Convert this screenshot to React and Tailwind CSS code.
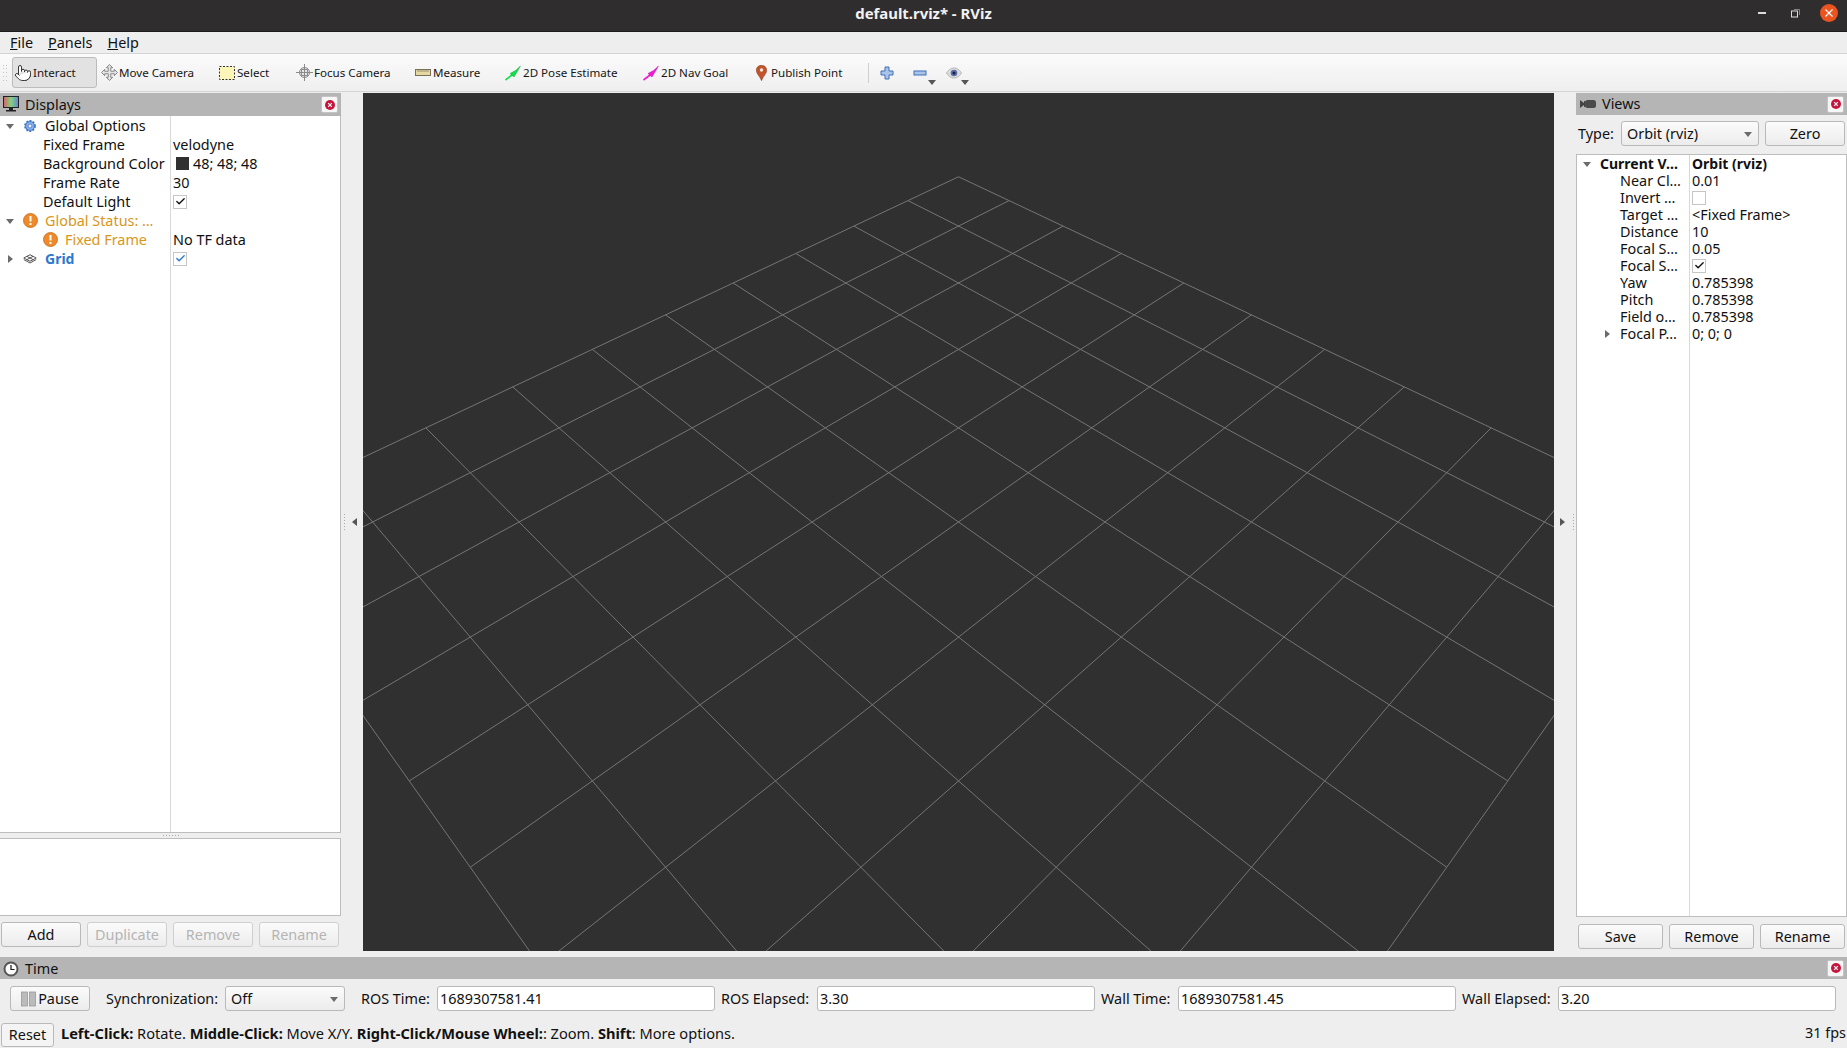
import { Check, Pointer } from "lucide-react";

// rviz orbit camera: distance 10, yaw/pitch/fov 0.785398, 10 cell grid
const VIEW_W = 1191;
const VIEW_H = 858;
const focal = VIEW_H / 2 / Math.tan(0.785398 / 2);

function project(x, y) {
  const rx = x - 5;
  const ry = y - 5;
  const rz = -7.07107;
  const depth = -(rx * -0.5 + ry * -0.5 + rz * -0.70711) * -1;
  const up = rx * -0.5 + ry * -0.5 + rz * 0.70711;
  const right = rx * -0.70711 + ry * 0.70711;
  return [VIEW_W / 2 + (focal * right) / depth, VIEW_H / 2 - (focal * up) / depth];
}

function gridLines() {
  const lines = [];
  for (let i = -5; i <= 5; i++) {
    lines.push([project(i, -5), project(i, 5)]);
    lines.push([project(-5, i), project(5, i)]);
  }
  return lines;
}

function Grid3D() {
  return (
    <svg viewBox={`0 0 ${VIEW_W} ${VIEW_H}`} className="block w-full h-full">
      {gridLines().map(([a, b], i) => (
        <line key={i} x1={a[0]} y1={a[1]} x2={b[0]} y2={b[1]} stroke="#757575" strokeWidth="1" />
      ))}
    </svg>
  );
}

function Arrow({ dir = "down", color = "#6b6b6b" }) {
  const pts = dir === "down" ? "0,2 8,2 4,7" : dir === "right" ? "2,0 7,4 2,8" : "6,0 1,4 6,8";
  return (
    <svg width="8" height="8" viewBox="0 0 8 8" className="shrink-0">
      <polygon points={pts} fill={color} />
    </svg>
  );
}

function CloseBtn() {
  return (
    <div className="w-[17px] h-[17px] bg-[#f6f6f6] border border-[#c4c4c4] rounded-[2px] flex items-center justify-center shrink-0">
      <svg width="12" height="12" viewBox="0 0 12 12">
        <circle cx="6" cy="6" r="5" fill="#c8143c" />
        <path d="M4.2 4.2l3.6 3.6M7.8 4.2l-3.6 3.6" stroke="#fff" strokeWidth="1.2" />
      </svg>
    </div>
  );
}

function Warn() {
  return (
    <svg width="15" height="15" viewBox="0 0 15 15" className="shrink-0">
      <circle cx="7.5" cy="7.5" r="7" fill="#ee8a2c" stroke="#c96a12" strokeWidth="0.8" />
      <rect x="6.5" y="3" width="2" height="5.5" fill="#fff" />
      <rect x="6.5" y="10" width="2" height="2" fill="#fff" />
    </svg>
  );
}

function Gear() {
  return (
    <svg width="14" height="14" viewBox="0 0 14 14" className="shrink-0">
      <circle cx="7" cy="7" r="5" fill="#8fb3e6" stroke="#3f74c4" strokeWidth="1.8" strokeDasharray="2 1.2" />
      <circle cx="7" cy="7" r="4.4" fill="none" stroke="#4d82d2" strokeWidth="1" />
      <circle cx="7" cy="7" r="2" fill="#e8f0fb" stroke="#3f74c4" strokeWidth="0.8" />
    </svg>
  );
}

function GridIcon() {
  return (
    <svg width="14" height="10" viewBox="0 0 14 10" className="shrink-0">
      <path d="M7 .7L13.2 4 7 7.3.8 4z M4 2.4l6.2 3.3M10 2.4L3.8 5.7M.8 5.6L7 9l6.2-3.4" fill="none" stroke="#444" strokeWidth="0.9" />
    </svg>
  );
}

function Box({ checked, color = "#111" }) {
  return (
    <div className="w-[14px] h-[14px] bg-white border border-[#c6c6c6] flex items-center justify-center shrink-0">
      {checked && <Check size={11} strokeWidth={3} color={color} />}
    </div>
  );
}

function TreeRow({ label, labelClass = "", indent, arrow, icon, value, rowClass = "h-[19px]", split = "w-[170px]", valueClass = "pl-[3px]" }) {
  return (
    <div className={`flex items-center ${rowClass}`}>
      <div className={`flex items-center shrink-0 overflow-hidden whitespace-nowrap ${split}`} style={{ paddingLeft: indent }}>
        {arrow && <span className="mr-[9px]"><Arrow dir={arrow} /></span>}
        {icon}
        <span className={labelClass}>{label}</span>
      </div>
      <div className={`flex items-center whitespace-nowrap ${valueClass}`}>{value}</div>
    </div>
  );
}

function QtButton({ children, disabled, className = "" }) {
  return (
    <div
      className={`h-[25px] border rounded-[3px] flex items-center justify-center bg-gradient-to-b from-[#fbfbfb] to-[#ececec] ${
        disabled ? "border-[#cfcfcf] text-[#b4b4b4]" : "border-[#b9b9b9] text-[#111]"
      } ${className}`}
    >
      {children}
    </div>
  );
}

function ToolItem({ icon, label, className }) {
  return (
    <div className={`flex items-center pl-[2px] gap-[2px] h-full text-[11.6px] text-[#161616] whitespace-nowrap ${className}`}>
      <span className="w-[16px] h-[16px] flex items-center justify-center shrink-0">{icon}</span>
      {label}
    </div>
  );
}

function DiagArrow({ color, dark }) {
  return (
    <svg width="16" height="16" viewBox="0 0 16 16">
      <path d="M0.5 15L9 8.5" stroke={color} strokeWidth="1.6" />
      <path d="M5 8.5l5.5-3 5-4.5-3.5 6-3 5z" fill={color} stroke={dark} strokeWidth="0.4" />
    </svg>
  );
}

function Toolbar() {
  return (
    <div className="h-[39px] flex items-center bg-gradient-to-b from-[#fbfbfb] to-[#efefef] border-y border-[#d4d4d4] shrink-0 pl-[3px]">
      <div className="w-[5px] h-[16px] mr-[4px] flex flex-wrap content-between">
        {[0, 1, 2, 3, 4].map((i) => (
          <div key={i} className="w-full flex gap-[2px]">
            <span className="w-[1px] h-[1px] bg-[#c4c4c4]" />
            <span className="w-[1px] h-[1px] bg-[#c4c4c4]" />
          </div>
        ))}
      </div>
      <ToolItem
        className="w-[85px] !h-[31px] bg-[#e2e2e2] border border-[#bcbcbc] rounded-[3px] mr-[2px]"
        label="Interact"
        icon={<Pointer size={18} strokeWidth={1.2} color="#222" fill="#fff" className="shrink-0" />}
      />
      <ToolItem
        className="w-[118px]"
        label="Move Camera"
        icon={
          <svg width="17" height="17" viewBox="0 0 16 16" className="shrink-0">
            <path d="M8 .5l3 3H9.200v3.300h3.300V5l3 3-3 3V9.200H9.200v3.300H11l-3 3-3-3h1.800V9.200H3.500V11l-3-3 3-3v1.800h3.300V3.500H5z" fill="#e4e4e4" stroke="#777" strokeWidth="0.8" />
          </svg>
        }
      />
      <ToolItem
        className="w-[77px]"
        label="Select"
        icon={
          <svg width="16" height="14" viewBox="0 0 16 14">
            <rect x="0.5" y="0.5" width="15" height="13" fill="#fbf5b8" stroke="#333" strokeWidth="1" strokeDasharray="2 1.5" />
          </svg>
        }
      />
      <ToolItem
        className="w-[119px]"
        label="Focus Camera"
        icon={
          <svg width="17" height="17" viewBox="0 0 17 17" className="shrink-0">
            <circle cx="8.5" cy="8.5" r="5" fill="#e6e6e6" stroke="#8a8a8a" strokeWidth="1" />
            <path d="M8.5 0v17M0 8.5h17M5.5 5.5v6M11.500 5.500v6M5.500 5.500h6M5.500 11.500h6" stroke="#8a8a8a" strokeWidth="1" />
          </svg>
        }
      />
      <ToolItem
        className="w-[90px]"
        label="Measure"
        icon={
          <svg width="16" height="7" viewBox="0 0 16 7">
            <rect x="0.5" y="0.5" width="15" height="6" fill="#e6d9a0" stroke="#77705a" strokeWidth="1" />
            <path d="M3 1v2M5 1v2M7 1v2M9 1v2M11 1v2M13 1v2" stroke="#77705a" strokeWidth="0.7" />
          </svg>
        }
      />
      <ToolItem className="w-[138px]" label="2D Pose Estimate" icon={<DiagArrow color="#12e04a" dark="#0a9a30" />} />
      <ToolItem className="w-[112px]" label="2D Nav Goal" icon={<DiagArrow color="#f01ad8" dark="#a80c96" />} />
      <ToolItem
        className="w-[113px] !pl-0"
        label="Publish Point"
        icon={
          <svg width="11" height="16" viewBox="0 0 11 16">
            <path d="M5.500 .3C2.400.3.3 2.500.3 5.300c0 3.400 3.500 5.800 5.200 10.400C7.200 11.100 10.700 8.700 10.700 5.300 10.700 2.500 8.600.3 5.500.3z" fill="#c4552b" stroke="#7d3a1c" strokeWidth="0.5" />
            <circle cx="5.500" cy="5" r="1.700" fill="#f5e9df" />
          </svg>
        }
      />
      <div className="w-[1px] h-[20px] bg-[#d0d0d0] ml-[2px]" />
      <div className="ml-[11px] w-[33px]">
        <svg width="14" height="14" viewBox="0 0 14 14">
          <path d="M5 1h4v4h4v4H9v4H5V9H1V5h4z" fill="#a8c4ea" stroke="#3f6fb5" strokeWidth="1" />
        </svg>
      </div>
      <div className="w-[33px] h-[26px] flex items-center relative">
        <svg width="14" height="6" viewBox="0 0 14 6">
          <rect x="1" y="1" width="12" height="4" fill="#a8c4ea" stroke="#3f6fb5" strokeWidth="1" />
        </svg>
        <span className="absolute left-[15px] bottom-0"><Arrow color="#555" /></span>
      </div>
      <div className="w-[33px] h-[26px] flex items-center relative">
        <svg width="16" height="12" viewBox="0 0 16 12">
          <path d="M.5 6C3 2 5.500 1 8 1s5 1 7.500 5C13 10 10.500 11 8 11S3 10 .5 6z" fill="#dcdcdc" stroke="#aaa" strokeWidth="0.8" />
          <circle cx="8" cy="6" r="3.300" fill="#5a6ea8" />
          <circle cx="8" cy="6" r="1.500" fill="#16204a" />
        </svg>
        <span className="absolute left-[15px] bottom-0"><Arrow color="#555" /></span>
      </div>
    </div>
  );
}

function DisplaysPanel() {
  return (
    <div className="w-[341px] shrink-0 flex flex-col">
      <div className="h-[23px] bg-[#b5b5b5] flex items-center justify-between pl-[3px] pr-[3px] shrink-0">
        <div className="flex items-center gap-[6px]">
          <svg width="16" height="16" viewBox="0 0 16 16">
            <defs>
              <linearGradient id="scr" x1="0" x2="1" y1="0" y2="0">
                <stop offset="0" stopColor="#d8606a" />
                <stop offset="0.5" stopColor="#7fd47f" />
                <stop offset="1" stopColor="#6a7fd8" />
              </linearGradient>
            </defs>
            <rect x="0.5" y="0.5" width="15" height="11" fill="url(#scr)" stroke="#222" strokeWidth="1" />
            <path d="M6 12h4v2h3v1.500H3V14h3z" fill="#222" />
          </svg>
          <span>Displays</span>
        </div>
        <CloseBtn />
      </div>
      <div className="flex-1 flex flex-col bg-white border-r border-b border-[#bdbdbd] relative">
        <div className="absolute left-[170px] top-0 bottom-0 w-[1px] bg-[#d9d9d9]" />
        <TreeRow indent={6} arrow="down" icon={<span className="mr-[8px]"><Gear /></span>} label="Global Options" />
        <TreeRow indent={43} label="Fixed Frame" value="velodyne" />
        <TreeRow
          indent={43}
          label="Background Color"
          value={
            <>
              <span className="w-[13px] h-[13px] bg-[#303030] ml-[3px] mr-[4px]" />
              48; 48; 48
            </>
          }
        />
        <TreeRow indent={43} label="Frame Rate" value="30" />
        <TreeRow indent={43} label="Default Light" value={<Box checked />} />
        <TreeRow indent={6} arrow="down" icon={<span className="mr-[7px]"><Warn /></span>} label="Global Status: …" labelClass="text-[#d9961a]" />
        <TreeRow indent={43} icon={<span className="mr-[7px]"><Warn /></span>} label="Fixed Frame" labelClass="text-[#d9961a]" value="No TF data" />
        <TreeRow indent={6} arrow="right" icon={<span className="mr-[8px]"><GridIcon /></span>} label="Grid" labelClass="font-bold text-[#2b78cf] text-[14px]" value={<Box checked color="#2b78cf" />} />
      </div>
      <div className="h-[5px] flex items-center justify-center gap-[2px] shrink-0">
        {[0, 1, 2, 3, 4, 5].map((i) => (
          <span key={i} className="w-[1px] h-[1px] bg-[#aaa]" />
        ))}
      </div>
      <div className="h-[78px] bg-white border-y border-r border-[#bdbdbd] shrink-0" />
      <div className="flex gap-[6px] pl-[1px] pt-[6px] pb-[10px] shrink-0">
        <QtButton className="w-[80px]">Add</QtButton>
        <QtButton disabled className="w-[80px]">Duplicate</QtButton>
        <QtButton disabled className="w-[80px]">Remove</QtButton>
        <QtButton disabled className="w-[80px]">Rename</QtButton>
      </div>
    </div>
  );
}

function Dots() {
  return (
    <div className="flex flex-col gap-[2px]">
      {[0, 1, 2, 3, 4, 5].map((i) => (
        <span key={i} className="w-[1px] h-[1px] bg-[#aaa]" />
      ))}
    </div>
  );
}

function ViewsPanel() {
  const row = { rowClass: "h-[17px]", split: "w-[112px]", indent: 43 };
  return (
    <div className="flex-1 flex flex-col min-w-0">
      <div className="h-[22px] bg-[#b5b5b5] flex items-center justify-between pl-[4px] pr-[3px] shrink-0">
        <div className="flex items-center gap-[6px]">
          <svg width="16" height="10" viewBox="0 0 16 10">
            <path d="M0 1l4 3V2h1v6H4V6L0 9z" fill="#444" />
            <rect x="5" y="1" width="11" height="8" rx="2.500" fill="#4a4a4a" />
          </svg>
          <span>Views</span>
        </div>
        <CloseBtn />
      </div>
      <div className="h-[39px] flex items-center pl-[2px] pb-[2px] shrink-0">
        <span className="w-[43px]">Type:</span>
        <QtButton className="w-[138px] !justify-between px-[5px] pr-[6px]">
          <span>Orbit (rviz)</span>
          <Arrow />
        </QtButton>
        <QtButton className="w-[80px] ml-[6px]">Zero</QtButton>
      </div>
      <div className="flex-1 bg-white border border-[#bdbdbd] relative">
        <div className="absolute left-[112px] top-0 bottom-0 w-[1px] bg-[#d9d9d9]" />
        <TreeRow {...row} indent={6} arrow="down" label="Current V…" labelClass="font-bold text-[14px]" value={<b className="text-[14px]">Orbit (rviz)</b>} />
        <TreeRow {...row} label="Near Cl…" value="0.01" />
        <TreeRow {...row} label="Invert …" value={<Box />} />
        <TreeRow {...row} label="Target …" value="<Fixed Frame>" />
        <TreeRow {...row} label="Distance" value="10" />
        <TreeRow {...row} label="Focal S…" value="0.05" />
        <TreeRow {...row} label="Focal S…" value={<Box checked />} />
        <TreeRow {...row} label="Yaw" value="0.785398" />
        <TreeRow {...row} label="Pitch" value="0.785398" />
        <TreeRow {...row} label="Field o…" value="0.785398" />
        <TreeRow {...row} indent={26} arrow="right" label="Focal P…" value="0; 0; 0" />
      </div>
      <div className="flex gap-[6px] pl-[2px] pt-[7px] pb-[8px] shrink-0">
        <QtButton className="w-[85px]">Save</QtButton>
        <QtButton className="w-[85px]">Remove</QtButton>
        <QtButton className="w-[85px]">Rename</QtButton>
      </div>
    </div>
  );
}

function TimeInput({ value }) {
  return (
    <div className="ml-[6px] w-[278px] h-[25px] bg-white border border-[#b9b9b9] rounded-[3px] flex items-center pl-[2px] shrink-0">{value}</div>
  );
}

function TimePanel() {
  return (
    <div className="shrink-0">
      <div className="h-[22px] bg-[#b5b5b5] flex items-center justify-between pl-[3px] pr-[3px]">
        <div className="flex items-center gap-[6px] pt-[1px]">
          <svg width="16" height="16" viewBox="0 0 16 16">
            <circle cx="8" cy="8" r="6.500" fill="#fff" stroke="#555" strokeWidth="2" />
            <path d="M8 4v4.500h3.500" fill="none" stroke="#111" strokeWidth="1.200" />
          </svg>
          <span>Time</span>
        </div>
        <CloseBtn />
      </div>
      <div className="h-[43px] flex items-center pl-[10px] pb-[4px]">
        <QtButton className="w-[80px] gap-[2px]">
          <svg width="15" height="16" viewBox="0 0 15 16">
            <rect x="0.500" y="1" width="6" height="14" fill="#bbb" stroke="#999" strokeWidth="0.800" />
            <rect x="8.500" y="1" width="6" height="14" fill="#bbb" stroke="#999" strokeWidth="0.800" />
          </svg>
          Pause
        </QtButton>
        <span className="ml-[16px] w-[113px] whitespace-nowrap">Synchronization:</span>
        <QtButton className="ml-[6px] w-[120px] !justify-between px-[5px] pr-[6px]">
          <span>Off</span>
          <Arrow />
        </QtButton>
        <span className="ml-[16px] w-[70px] whitespace-nowrap">ROS Time:</span>
        <TimeInput value="1689307581.41" />
        <span className="ml-[6px] w-[90px] whitespace-nowrap">ROS Elapsed:</span>
        <TimeInput value="3.30" />
        <span className="ml-[6px] w-[71px] whitespace-nowrap">Wall Time:</span>
        <TimeInput value="1689307581.45" />
        <span className="ml-[6px] w-[90px] whitespace-nowrap">Wall Elapsed:</span>
        <TimeInput value="3.20" />
      </div>
    </div>
  );
}

export default function App() {
  return (
    <div className="w-[1847px] h-[1048px] flex flex-col overflow-hidden bg-[#eeeeee] text-[14.4px] text-[#111] font-['Noto_Sans',sans-serif]">
      <div className="h-[32px] bg-[#2f2d2d] border-b border-[#1c1c1c] flex items-center shrink-0 relative">
        <span className="mx-auto font-bold text-[14.900px] text-[#f2f2f2] pb-[4px]">default.rviz* - RViz</span>
        <div className="absolute right-[9px] top-[4px] flex items-center">
          <span className="w-[8px] h-[1.5px] bg-[#ddd] mr-[25px]" />
          <svg width="9" height="9" viewBox="0 0 9 9" className="mr-[20px]">
            <rect x="0.500" y="2" width="6" height="6" fill="none" stroke="#ddd" strokeWidth="1" />
            <path d="M3 0.500h5.500V6" fill="none" stroke="#999" strokeWidth="0.800" />
          </svg>
          <div className="w-[18px] h-[18px] rounded-full bg-[#e95420] flex items-center justify-center">
            <svg width="10" height="10" viewBox="0 0 10 10">
              <path d="M1.500 1.500l7 7M8.500 1.500l-7 7" stroke="#fff" strokeWidth="1.200" />
            </svg>
          </div>
        </div>
      </div>
      <div className="h-[21px] flex items-center gap-[15px] pl-[10px] shrink-0">
        <span><u>F</u>ile</span>
        <span><u>P</u>anels</span>
        <span><u>H</u>elp</span>
      </div>
      <Toolbar />
      <div className="flex-1 flex min-h-0 pt-[1px]">
        <DisplaysPanel />
        <div className="w-[22px] shrink-0 flex items-center gap-[6px] pl-[3px] pb-[6px]">
          <Dots />
          <Arrow dir="left" color="#555" />
        </div>
        <div className="w-[1191px] shrink-0 bg-[#303030] mb-[6px]">
          <Grid3D />
        </div>
        <div className="w-[22px] shrink-0 flex items-center gap-[7px] pl-[4px] pb-[6px]">
          <Arrow dir="right" color="#555" />
          <Dots />
        </div>
        <ViewsPanel />
      </div>
      <TimePanel />
      <div className="h-[26px] flex items-center shrink-0 pl-[1px] pr-[1px]">
        <div className="w-[53px] h-[24px] border border-[#b9b9b9] rounded-[3px] bg-[#f4f4f4] flex items-center justify-center">Reset</div>
        <span className="ml-[7px] whitespace-nowrap text-[14.600px] pb-[3px]">
          <b>Left-Click:</b> Rotate. <b>Middle-Click:</b> Move X/Y. <b>Right-Click/Mouse Wheel:</b>: Zoom. <b>Shift</b>: More options.
        </span>
        <span className="ml-auto pb-[5px]">31 fps</span>
      </div>
    </div>
  );
}
